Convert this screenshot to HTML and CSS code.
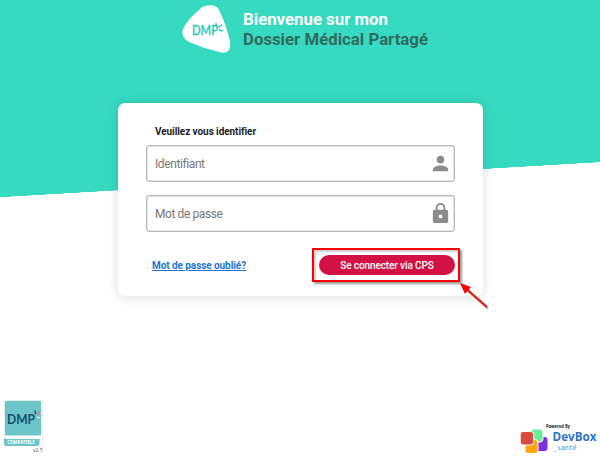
FILE: index.html
```html
<!DOCTYPE html>
<html lang="fr">
<head>
<meta charset="utf-8">
<title>Dossier Médical Partagé</title>
<link rel="stylesheet" href="styles.css">
</head>
<body>
<div class="page">
  <header class="brand">
    <svg class="brand-logo" width="49" height="49" viewBox="0 0 49 49">
      <path d="M18 4Q22 0 30 .3Q36 1 38 7Q45 22 48 37Q49.500 49 39 47.500Q23 44 7 37Q-3 31 2 22Q8 12 18 4Z" fill="#fff"/>
      <text class="brand-dmp" x="10" y="30" textLength="26" lengthAdjust="spacingAndGlyphs">DMP</text>
      <path d="M35 21.500L33.800 18M36.500 22.500L40 19.500M37 25L41 26" stroke="#2cc9b2" stroke-width="1.300"/>
    </svg>
    <h1 class="brand-title"><span class="welcome">Bienvenue sur mon</span><span class="product">Dossier Médical Partagé</span></h1>
  </header>

  <main class="card">
    <h2 class="card-title">Veuillez vous identifier</h2>
    <div class="field">
      <span>Identifiant</span>
      <svg class="field-icon" width="24" height="24" viewBox="0 0 24 24"><path d="M12 12c2.210 0 4-1.790 4-4s-1.790-4-4-4-4 1.790-4 4 1.790 4 4 4zm0 2c-2.670 0-8 1.340-8 4v2h16v-2c0-2.660-5.330-4-8-4z"/></svg>
    </div>
    <div class="field">
      <span>Mot de passe</span>
      <svg class="field-icon" width="24" height="24" viewBox="0 0 24 24"><path d="M18 8h-1V6c0-2.760-2.240-5-5-5S7 3.240 7 6v2H6c-1.100 0-2 .9-2 2v10c0 1.100.9 2 2 2h12c1.100 0 2-.9 2-2V10c0-1.100-.9-2-2-2zm-6 9c-1.100 0-2-.9-2-2s.9-2 2-2 2 .9 2 2-.9 2-2 2zm3.100-9H8.900V6c0-1.710 1.390-3.100 3.100-3.100s3.100 1.390 3.100 3.100v2z"/></svg>
    </div>
    <div class="actions">
      <a class="forgot">Mot de passe oublié?</a>
      <div class="highlight">
        <button class="connect">Se connecter via CPS</button>
        <svg class="arrow" width="32" height="30" viewBox="0 0 32 30">
          <path d="M4 5L29 27" stroke="#bbb" stroke-width="2"/>
          <path d="M3 3L28 25" stroke="#f00" stroke-width="1.700"/>
          <path d="M1 1L12 5L6 12Z" fill="#f00"/>
        </svg>
      </div>
    </div>
  </main>

  <footer class="footer">
    <svg class="compat" width="46" height="56" viewBox="0 0 46 56">
      <rect x="4.500" y="1.500" width="38" height="45" rx="2" fill="#fff" stroke="#e3eaea"/>
      <rect x="5" y="2" width="36" height="34.500" rx="1" fill="#6cc5c7"/>
      <text class="compat-dmp" x="7" y="24.500" textLength="28" lengthAdjust="spacingAndGlyphs">DMP</text>
      <path d="M35.500 15L35 11.500" stroke="#14506b" stroke-width="1.300"/>
      <path d="M36.500 16L39.500 13" stroke="#ed7655" stroke-width="1.500"/>
      <path d="M37 18L40 19" stroke="#f5eee1" stroke-width="1.300"/>
      <path d="M4 38Q4 40 8 40H39.500V44.500Q39.500 47 36.500 47H6.500Q4 47 4 44.500Z" fill="#6cc5c7"/>
      <text class="compat-label" x="7.500" y="45.400" textLength="27" lengthAdjust="spacingAndGlyphs">COMPATIBLE</text>
      <text class="version" x="33" y="53" textLength="9.500" lengthAdjust="spacingAndGlyphs">v2.5</text>
    </svg>
    <svg class="devbox" width="80" height="36" viewBox="0 0 80 36">
      <text class="powered" x="26" y="6.500" textLength="24" lengthAdjust="spacingAndGlyphs">Powered By</text>
      <rect x="15" y="16" width="12.500" height="14" rx="3" fill="#812de0"/>
      <rect x="11" y="8" width="12" height="13" rx="3" fill="#68ec99" stroke="#fff"/>
      <rect x="5" y="18.500" width="13" height="14" rx="3" fill="#ffa50a" stroke="#fff"/>
      <rect x=".2" y="10.500" width="13.500" height="13.500" rx="3" fill="#d74b41" stroke="#fff"/>
      <text class="devbox-name" x="32.500" y="19.500" textLength="44" lengthAdjust="spacingAndGlyphs">DevBox</text>
      <text class="devbox-sub" x="33.500" y="29" textLength="23" lengthAdjust="spacingAndGlyphs">_santé</text>
    </svg>
  </footer>
</div>
</body>
</html>
```
FILE: styles.css
```css
* { box-sizing: border-box; }
body { margin: 0; font-family: Roboto, "Liberation Sans", sans-serif; }
.page {
  width: 600px; height: 462px; overflow: hidden;
  display: flex; flex-direction: column; align-items: center;
  background: linear-gradient(to bottom right, #35dac1 50%, #fff 50.500%) 0 162px / 600px 35px no-repeat,
    linear-gradient(#35dac1, #35dac1) 0 0 / 600px 162px no-repeat, #fff;
}
.brand { display: flex; width: 236px; height: 103px; padding-top: 5px; gap: 12px; }
.brand-logo { flex: none; }
.brand-dmp { font: 500 12.500px Lato, sans-serif; fill: #2cc9b2; stroke: #2cc9b2; stroke-width: .3; }
.brand-title { margin: 4px 0 0; font-size: 16.800px; line-height: 20px; font-weight: 700; white-space: nowrap; }
.brand-title span { display: block; }
.welcome { color: #fff; }
.product { color: #34695f; }
.card {
  width: 365px; height: 193px; padding: 22px 28px 0; margin-left: 1px;
  background: #fff; border-radius: 7px; box-shadow: 0 1px 12px rgba(0, 0, 0, .14);
}
.card-title { margin: 0 0 7px 9px; font-size: 10px; line-height: 13px; font-weight: 700; letter-spacing: -.07px; color: #222; }
.field {
  display: flex; align-items: center; justify-content: space-between;
  height: 37px; margin-bottom: 13px; padding: 0 2px 0 8px;
  border: 1px solid #b8b8b8; border-radius: 3px;
  box-shadow: inset 0 0 0 .5px #ccc;
  font-size: 12px; letter-spacing: -.4px; color: #777;
}
.field-icon { width: 23px; height: 23px; fill: #8b8b8b; }
.actions { display: flex; align-items: center; justify-content: space-between; margin: 16px -5px 0 6px; }
.forgot { font-size: 10px; font-weight: 700; letter-spacing: -.07px; color: #2474d0; text-decoration: underline; }
.highlight {
  position: relative; display: flex; width: 148px; height: 34px; padding: 5px 3px 5px 5px;
  border: 2px solid #f00; box-shadow: 2px 2px 2px rgba(0, 0, 0, .4), inset 2px 2px 2px rgba(0, 0, 0, .2);
}
.connect {
  flex: 1; height: 20px; padding: 0; border: 0; border-radius: 10px;
  background: #d31145; color: #fff; font: 500 10px Roboto, sans-serif; letter-spacing: -.1px;
}
.arrow { position: absolute; left: 145px; top: 32px; }
.footer { display: flex; justify-content: space-between; width: 600px; margin-top: 103px; }
.devbox { margin: 22px 0 0; }
.compat-dmp { font: 700 13px Lato, sans-serif; fill: #14506b; }
.compat-label { font: 700 5px "Open Sans", sans-serif; fill: #fff; }
.version { font: 6px "Open Sans", sans-serif; fill: #555; }
.powered { font: 700 5px "Open Sans", sans-serif; fill: #222; }
.devbox-name { font: 700 12px "Open Sans", sans-serif; fill: #2d74c9; }
.devbox-sub { font: 7px "DejaVu Sans Mono", monospace; fill: #4b8bd6; }
```
